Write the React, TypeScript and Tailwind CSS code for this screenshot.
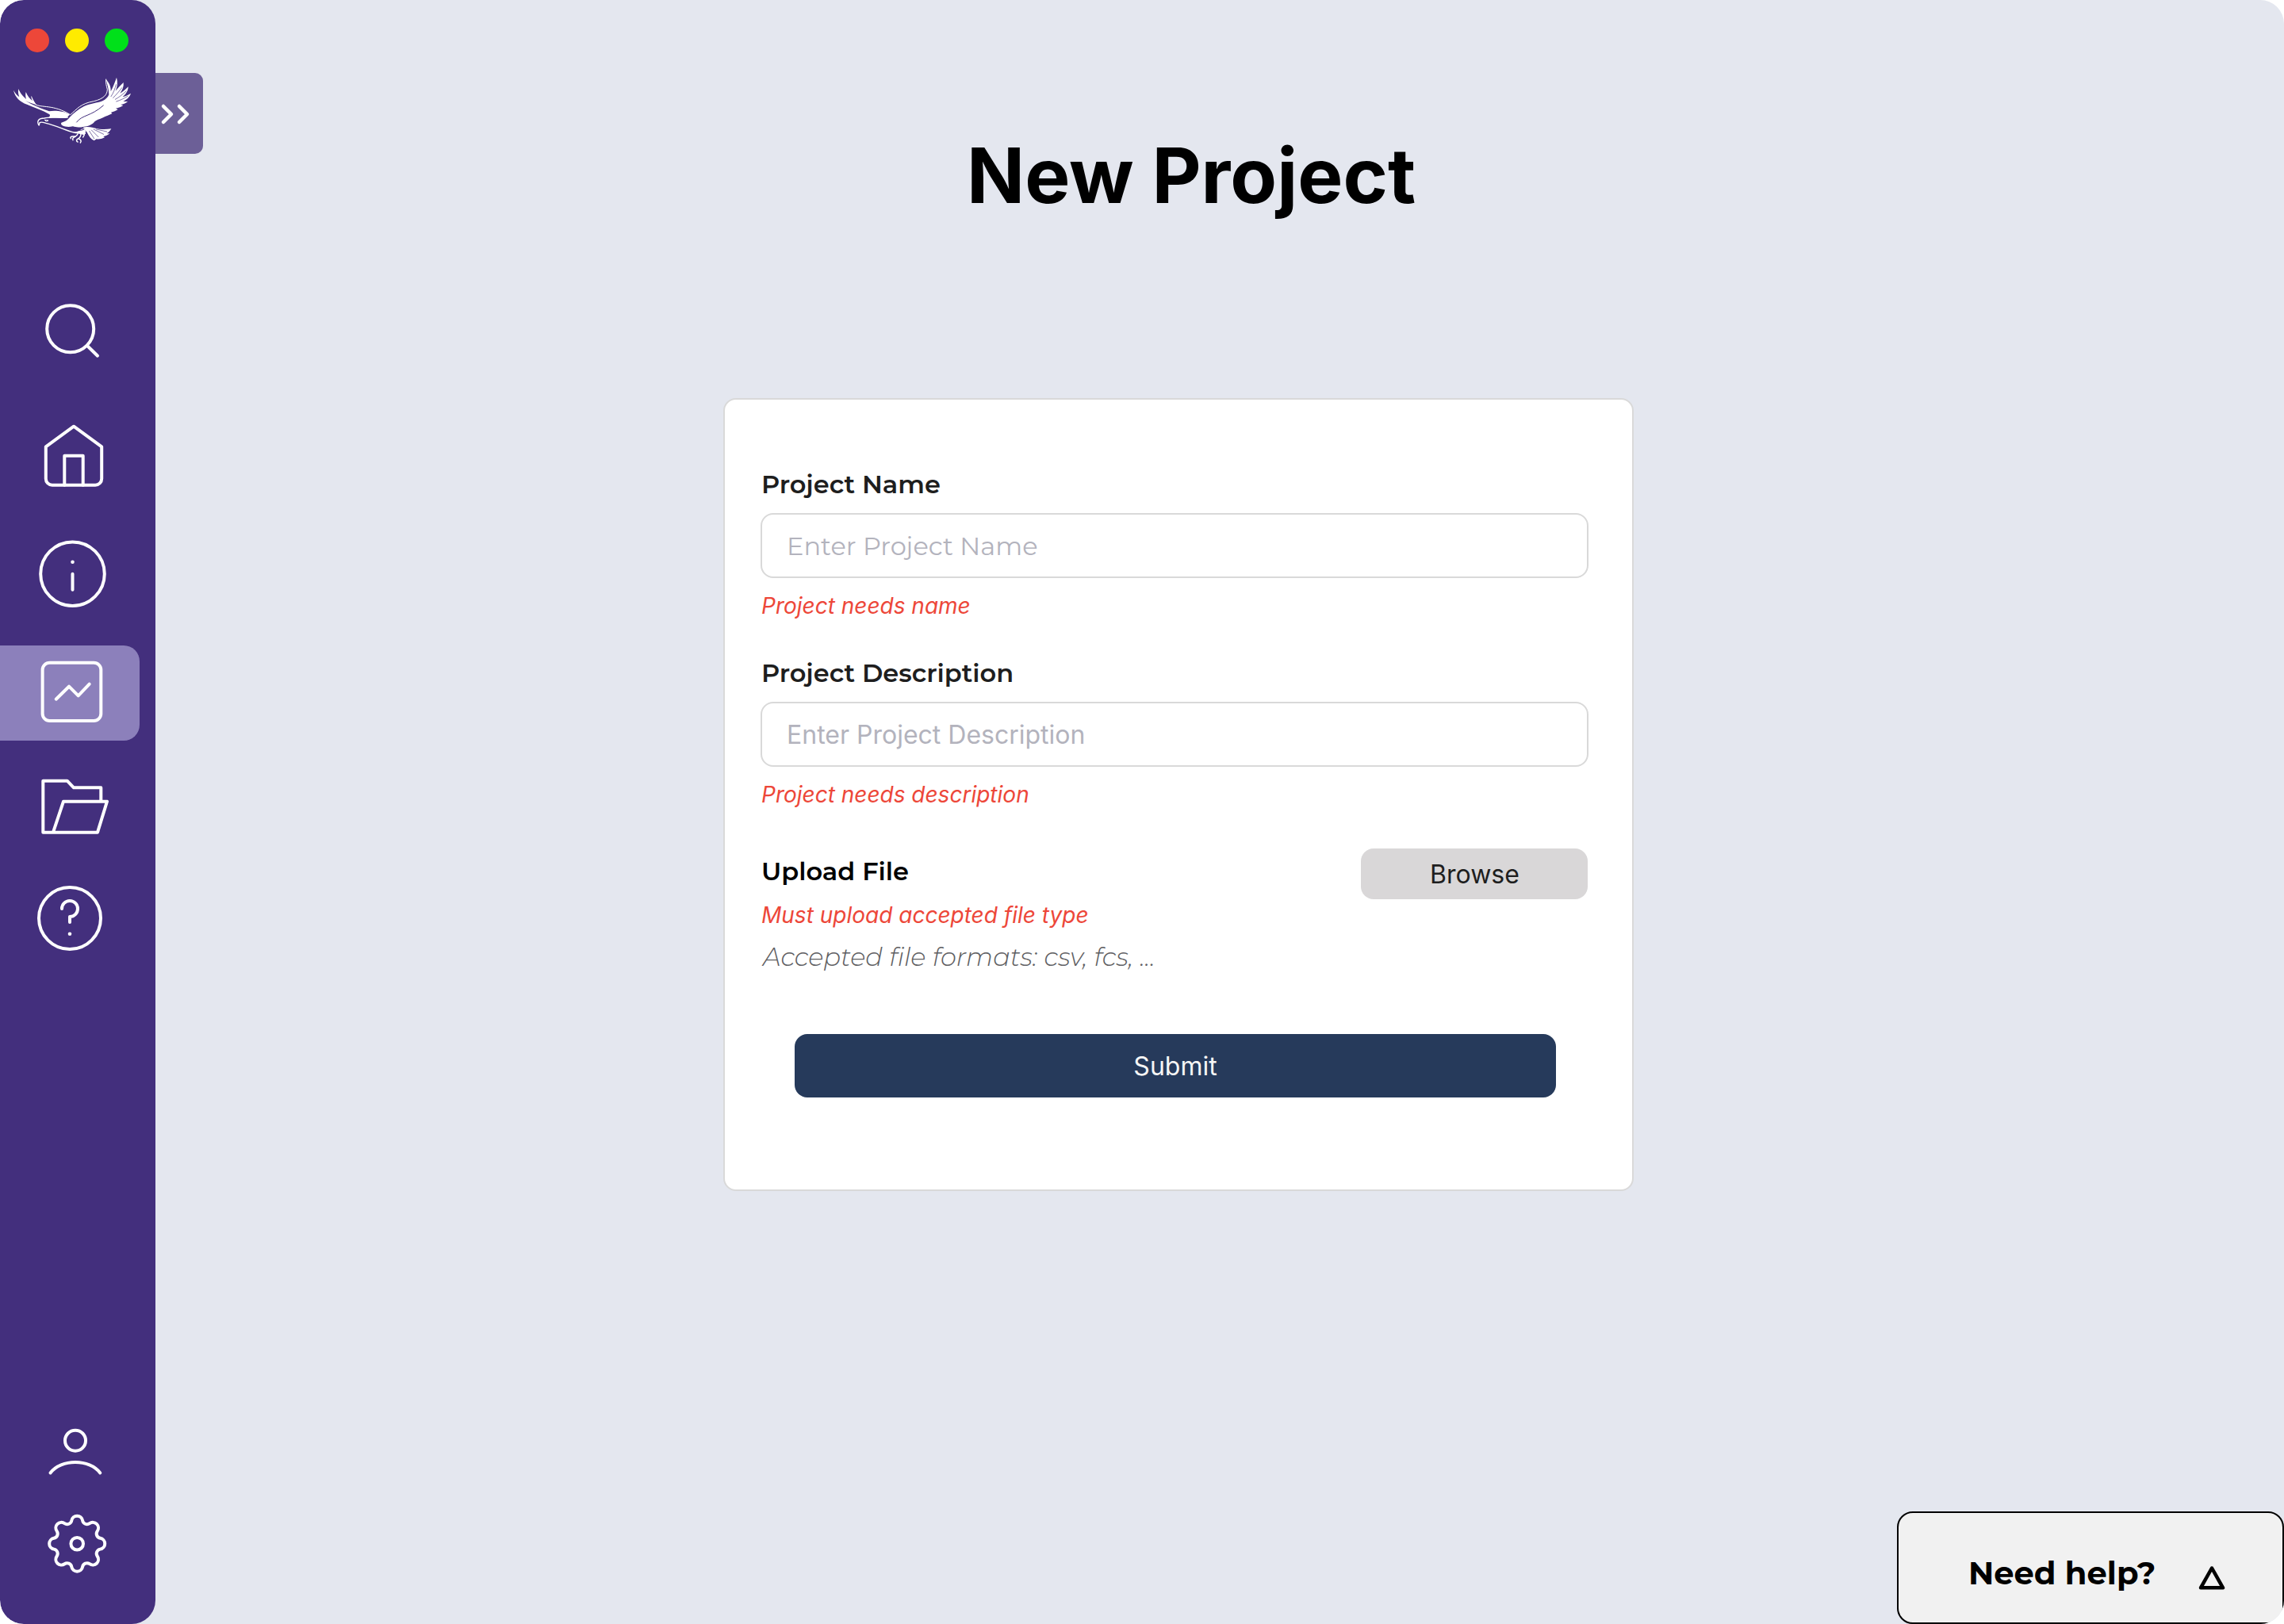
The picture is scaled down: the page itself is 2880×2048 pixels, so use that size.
import type { ReactNode } from "react";

function Icon({ children }: { children: ReactNode }) {
  return (
    <svg
      viewBox="0 0 88 88"
      className="ml-12 block size-[88px] shrink-0 overflow-visible"
      fill="none"
      stroke="white"
      strokeWidth={4}
      strokeLinecap="round"
      strokeLinejoin="round"
    >
      {children}
    </svg>
  );
}

// eight round lobes joined by tangent arcs
function gearPath(cx: number, cy: number) {
  const lobe = 7;
  const valley = 5.7;
  const pt = (r: number, deg: number) => {
    const a = (deg * Math.PI) / 180;
    return [cx + r * Math.sin(a), cy - r * Math.cos(a)];
  };
  const join = (l: number[], v: number[]) => {
    const t = lobe / (lobe + valley);
    return `${(l[0] + (v[0] - l[0]) * t).toFixed(2)} ${(l[1] + (v[1] - l[1]) * t).toFixed(2)}`;
  };
  let d = "";
  for (let i = 0; i < 8; i++) {
    const l = pt(28, i * 45);
    const before = pt(32.7, i * 45 - 22.5);
    const after = pt(32.7, i * 45 + 22.5);
    d += i === 0 ? `M${join(l, before)}` : `A${valley} ${valley} 0 0 0 ${join(l, before)}`;
    d += `A${lobe} ${lobe} 0 0 1 ${join(l, after)}`;
  }
  return `${d}A${valley} ${valley} 0 0 0 ${join(pt(28, 0), pt(32.7, -22.5))}Z`;
}

function Eagle() {
  return (
    <svg viewBox="0 0 480 300" className="ml-2.5 block h-[100px] w-40" fill="none" strokeLinecap="round" strokeLinejoin="round">
      <g fill="white">
        <path d="M21 71C27 82 33 90 43 97C39 87 38 77 40 66C46 82 54 91 69 105C66 95 66 86 68 78C74 93 82 103 94 112C89 104 87 98 89 92C94 106 100 114 108 127C92 122 78 117 66 111C92 128 130 141 156 151C176 147 216 150 234 164L222 175C200 176 178 175 152 176C160 170 161 165 156 162C135 148 100 138 72 125C45 115 27 98 21 71Z" />
        <path d="M202 194C216 190 226 184 234 173C248 158 266 144 288 132C312 121 338 120 358 112C370 107 378 98 382 88C382 68 376 50 371 30C383 43 390 58 389 76C396 62 404 44 411 23C416 42 414 58 407 74C417 62 427 52 437 42C439 56 434 70 424 83C435 77 445 69 455 58C455 74 446 86 434 97C445 94 455 90 465 83C460 98 449 107 436 113C444 114 449 114 454 113C445 121 436 124 426 126L436 129C428 135 419 138 408 140L416 144C408 150 400 152 390 155L394 160C382 166 373 168 360 175C345 182 335 184 328 190C320 202 300 209 288 209C270 213 256 212 246 208C230 212 215 210 206 205C201 201 200 197 202 194Z" />
        <path d="M284 212C306 206 326 216 346 218C362 220 376 219 391 217C386 226 380 231 374 235L385 235C377 242 370 244 361 246L366 250C354 256 343 258 335 256L326 262C315 257 306 246 300 232Z" />
        <path d="M250 230C262 228 270 226 278 218L292 216L294 236L286 240L270 236Z" />
      </g>
      <g stroke="white" strokeWidth={4}>
        <path d="M104 125C126 139 172 124 236 164C262 142 274 122 325 113C362 104 376 88 376 68C372 54 370 44 371 30" strokeWidth={3} />
        <path d="M117 204C108 188 116 177 138 177C160 171 190 177 226 174" />
        <path d="M118 203L120 194C128 190 136 194 144 196C185 205 220 225 250 231C265 235 280 232 292 226" />
        <path d="M140 184L153 186L146 189Z" strokeWidth={3} />
        <path d="M264 236C262 243 256 247 246 246C238 246 235 250 238 254M256 246C246 250 243 254 246 260M276 236C276 244 272 252 263 256C257 260 260 266 264 267M268 255C276 258 279 264 274 270M284 232L289 240L284 249" strokeWidth={4.5} />
      </g>
      <g stroke="#432f7d" strokeWidth={2}>
        <path d="M260 192C282 163 312 172 361 129" strokeWidth={3} />
        <path d="M390 95C399 82 405 66 409 50" />
        <path d="M398 100C410 88 422 74 431 62" />
        <path d="M406 106C420 98 436 86 447 75" />
        <path d="M410 114C426 109 440 102 453 94" />
        <path d="M316 222L342 248M324 219L362 238M334 219L374 228M308 226L326 254" />
        <path d="M258 220C268 225 280 224 288 219" strokeWidth={3} />
      </g>
    </svg>
  );
}

function Sidebar() {
  return (
    <aside className="flex w-[196px] shrink-0 flex-col rounded-[30px] bg-[#432f7d]">
      <div className="flex gap-5 pt-9 pl-8">
        <span className="size-[30px] rounded-full bg-[#ed4739]" />
        <span className="size-[30px] rounded-full bg-[#ffeb00]" />
        <span className="size-[30px] rounded-full bg-[#00e01a]" />
      </div>
      <div className="mt-6">
        <Eagle />
      </div>

      <nav className="mt-[182px] flex flex-col">
        <Icon>
          <circle cx={40.7} cy={42.7} r={29.5} />
          <path d="M62 64L75 76.7" />
        </Icon>
        <div className="mt-[70px]">
          <Icon>
            <path d="M9.8 33.3L45 7.7L80.2 33.3V73.7A8 8 0 0 1 72.2 81.7H17.8A8 8 0 0 1 9.8 73.7Z" />
            <path d="M33.3 81.7V44.7H56.7V81.7" />
          </Icon>
        </div>
        <div className="mt-[62px]">
          <Icon>
            <circle cx={43.5} cy={43.7} r={40.3} />
            <path d="M43.5 43.7V63.7" />
            <circle cx={43.5} cy={28.7} r={2.3} fill="white" stroke="none" />
          </Icon>
        </div>
        <div className="mt-[46px] flex h-[120px] w-44 rounded-r-[20px] bg-[#8c80bb] pt-4">
          <Icon>
            <rect x={5.6} y={5.7} width={73.7} height={73.3} rx={9} />
            <path d="M22.7 51.7L39 35.7L50.7 47.3L64.7 32.7" />
          </Icon>
        </div>
        <div className="mt-10">
          <Icon>
            <path d="M79.3 36.7V19.3H45L36.7 10.7H6.3V75.7H75L87 36.7H32L19 75.7" />
          </Icon>
        </div>
        <div className="mt-[52px]">
          <Icon>
            <circle cx={40} cy={44} r={39} />
            <path d="M30 32A10 10 0 1 1 40 42V49" />
            <circle cx={40} cy={63.7} r={2.3} fill="white" stroke="none" />
          </Icon>
        </div>
      </nav>

      <div className="mt-auto flex flex-col gap-8 pb-[58px]">
        <Icon>
          <circle cx={47} cy={34.7} r={13} />
          <path d="M15.5 75.5C29 57.5 65 57.5 78.3 75.5" />
        </Icon>
        <Icon>
          <path d={gearPath(49.2, 44.7)} />
          <circle cx={49.2} cy={44.7} r={7.8} />
        </Icon>
      </div>
    </aside>
  );
}

function Field({ label, placeholder, error, inputClass }: { label: string; placeholder: string; error: string; inputClass: string }) {
  return (
    <div>
      <label className="block pl-px font-[Montserrat,Inter,sans-serif] text-[32px] leading-10 font-semibold text-[#1e1e1e]">{label}</label>
      <input
        className={`mt-4 block h-[82px] w-[1044px] rounded-2xl border-2 border-[#d9d9d9] bg-white px-[31px] text-[32px] placeholder:text-[#b3b3bd] ${inputClass}`}
        placeholder={placeholder}
      />
      <p className="mt-[18px] pl-px text-[28px] leading-[34px] text-[#ed4739] italic">{error}</p>
    </div>
  );
}

export default function App() {
  return (
    <div className="h-[2048px] w-[2880px] bg-white font-[Inter,sans-serif]">
      <div className="relative flex h-full overflow-hidden rounded-[30px] bg-[#e4e7ef]">
        <div className="absolute top-0 left-0 h-full w-10 bg-white" />
        <div className="relative flex">
          <Sidebar />
          <button type="button" className="absolute top-[92px] left-[196px] flex h-[102px] w-[60px] items-center rounded-r-[10px] bg-[#6c5f97] pl-1.5">
            <svg viewBox="0 0 40 28" className="mt-0.5 h-7 w-10" fill="none" stroke="white" strokeWidth={4.5} strokeLinecap="round" strokeLinejoin="round">
              <path d="M4 4L14 14L4 24M24 4L34 14L24 24" />
            </svg>
          </button>
        </div>

        <main className="flex flex-1 flex-col">
          <h1 className="mt-[163px] ml-[1023px] text-[96px] leading-[116px] font-bold text-black">New Project</h1>

          <form className="mt-[223px] ml-[716px] h-[1000px] w-[1148px] rounded-2xl border-2 border-[#d9d9d9] bg-white pt-[87px] pl-[45px]">
            <Field
              label="Project Name"
              placeholder="Enter Project Name"
              error="Project needs name"
              inputClass="font-[Montserrat,Inter,sans-serif] font-normal"
            />
            <div className="mt-12">
              <Field label="Project Description" placeholder="Enter Project Description" error="Project needs description" inputClass="font-normal" />
            </div>

            <div className="mt-[51px] flex w-[1043px] items-start justify-between">
              <div className="pt-[9px] pl-px">
                <p className="font-[Montserrat,Inter,sans-serif] text-[32px] leading-10 font-semibold text-black">Upload File</p>
                <p className="mt-[18px] text-[28px] leading-[34px] text-[#ed4739] italic">Must upload accepted file type</p>
                <p className="mt-4 pl-0.5 font-[Montserrat,Inter,sans-serif] text-[32px] leading-10 font-light text-[#5f5f63] italic">
                  Accepted file formats: csv, fcs, ...
                </p>
              </div>
              <button type="button" className="h-16 w-[286px] rounded-2xl bg-[#d9d7d8] pt-px pl-px text-[32px] text-[#1e1e1e]">
                Browse
              </button>
            </div>

            <button type="submit" className="mt-[77px] ml-[43px] block h-20 w-[960px] rounded-2xl bg-[#263a5b] pt-px text-[32px] text-[#f5f5f5]">
              Submit
            </button>
          </form>

          <div className="mt-auto ml-auto flex h-[142px] w-[488px] rounded-[20px] border-2 border-black bg-[#f1f1f1] pt-12 pl-[88px]">
            <span className="w-[290px] font-[Montserrat,Inter,sans-serif] text-[40px] leading-[56px] font-bold whitespace-nowrap text-black">Need help?</span>
            <svg viewBox="0 0 34 30" className="mt-[19px] h-[30px] w-[34px]" fill="none" stroke="black" strokeWidth={4.5} strokeLinejoin="round">
              <path d="M17 2.5L31 27.3H3Z" />
            </svg>
          </div>
        </main>
      </div>
    </div>
  );
}
